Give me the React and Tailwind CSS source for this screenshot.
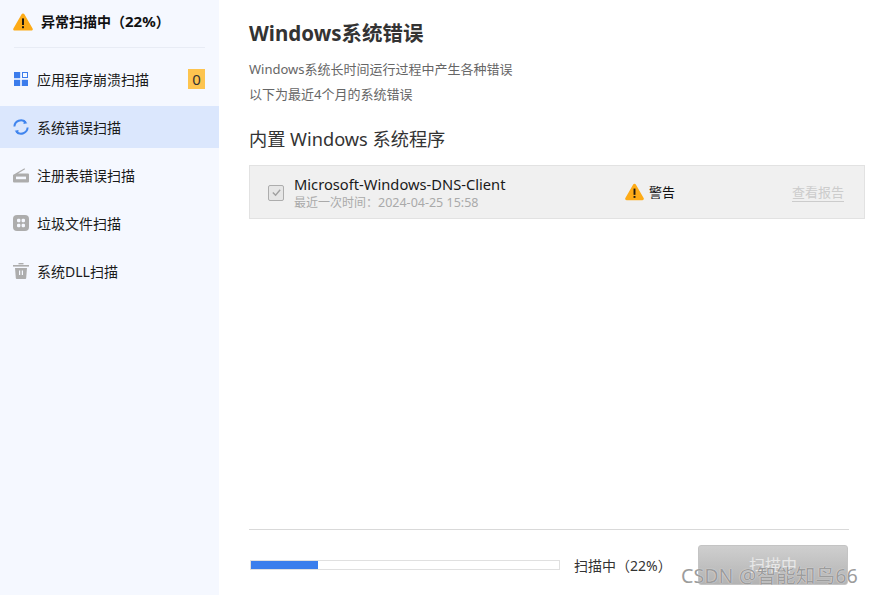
import React from "react";

function Warn({ className }) {
  return (
    <svg viewBox="0 0 20 18" className={className}>
      <path d="M10 0.4c.6 0 1.1.3 1.4.8l8.2 14.2c.6 1-.1 2.2-1.3 2.2H1.7C.5 17.6-.2 16.4.4 15.4l8.2-14.2c.3-.5.8-.8 1.4-.8z" fill="#fdab17" />
      <rect x="9" y="5.4" width="2" height="6.6" fill="#1f1a10" />
      <rect x="9" y="13.2" width="2" height="2" fill="#1f1a10" />
    </svg>
  );
}

function NavItem({ icon, label, active, badge }) {
  return (
    <div className={`flex h-[42px] items-center pl-[13px] mb-[6px] ${active ? "bg-[#dbe7fd]" : ""}`}>
      <span className="flex h-[16px] w-[16px] shrink-0 items-center justify-center">{icon}</span>
      <span className="ml-[8px] flex-1 text-[14px] text-[#1a1a1a]">{label}</span>
      {badge != null && (
        <span className="mr-[14px] flex h-[20px] w-[17px] items-center justify-center bg-[#fdc44f] text-[15px] text-[#333]">{badge}</span>
      )}
    </div>
  );
}

export default function App() {
  return (
    <div className="relative flex h-[595px] w-[873px] overflow-hidden bg-white font-['Noto_Sans','Noto_Sans_CJK_SC',sans-serif]">
      <aside className="w-[219px] shrink-0 bg-[#f5f8ff]">
        <div className="mx-[14px] flex h-[48px] items-center border-b border-[#e8ecf5] pb-[4px]">
          <Warn className="h-[18px] w-[20px] -ml-[1px]" />
          <span className="ml-[8px] text-[14px] font-bold text-[#111]">异常扫描中（<span className="text-[15px]">22%</span>）</span>
        </div>
        <div className="mt-[10px]">
          <NavItem
            badge="0"
            label="应用程序崩溃扫描"
            icon={
              <svg viewBox="0 0 14 14" className="h-[14px] w-[14px]">
                <rect x="0" y="0" width="6.2" height="6.2" fill="#3b7cec" />
                <rect x="8.5" y="0.5" width="5" height="5" fill="none" stroke="#3b7cec" />
                <rect x="0" y="7.8" width="6.2" height="6.2" fill="#3b7cec" />
                <rect x="7.8" y="7.8" width="6.2" height="6.2" fill="#3b7cec" />
              </svg>
            }
          />
          <NavItem
            active
            label="系统错误扫描"
            icon={
              <svg viewBox="0 0 16 16" className="h-[16px] w-[16px]" fill="none" stroke="#4085ee" strokeWidth="2">
                <path d="M1.4 7.5A6.6 6.6 0 0 1 12.6 3.2" />
                <path d="M14.6 8.5A6.6 6.6 0 0 1 3.4 12.8" />
                <path d="M11 .8l3.3 3.4-3.8.7z" fill="#4085ee" stroke="none" />
                <path d="M5 15.2l-3.3-3.4 3.8-.7z" fill="#4085ee" stroke="none" />
              </svg>
            }
          />
          <NavItem
            label="注册表错误扫描"
            icon={
              <svg viewBox="0 0 16 15" className="h-[15px] w-[16px]">
                <path d="M.8 6.5L11.5.3l.6 1L5 5.5h10a1 1 0 0 1 1 1v7a1 1 0 0 1-1 1H1a1 1 0 0 1-1-1v-6a1 1 0 0 1 .8-1z" fill="#adadad" />
                <rect x="3" y="8.6" width="10" height="2.6" fill="#f5f8ff" />
              </svg>
            }
          />
          <NavItem
            label="垃圾文件扫描"
            icon={
              <svg viewBox="0 0 16 16" className="h-[16px] w-[16px]">
                <rect x="0" y="0" width="16" height="16" rx="4" fill="#adadad" />
                <rect x="4" y="3.8" width="3.4" height="3.4" rx="1.2" fill="#f5f8ff" />
                <rect x="8.6" y="3.8" width="3.4" height="3.4" rx="1.2" fill="#f5f8ff" />
                <rect x="4" y="8.8" width="3.4" height="3.4" rx="1.2" fill="#f5f8ff" />
                <rect x="8.6" y="8.8" width="3.4" height="3.4" rx="1.2" fill="#f5f8ff" />
              </svg>
            }
          />
          <NavItem
            label="系统DLL扫描"
            icon={
              <svg viewBox="0 0 16 16" className="h-[16px] w-[16px]">
                <rect x="5.5" y="0" width="5" height="1.4" fill="#adadad" />
                <rect x="0" y="2" width="16" height="1.6" fill="#adadad" />
                <path d="M2 5h12l-.8 10a1 1 0 0 1-1 1H3.8a1 1 0 0 1-1-1z" fill="#adadad" />
                <rect x="6" y="7.5" width="1.2" height="4.5" fill="#f5f8ff" />
                <rect x="8.8" y="7.5" width="1.2" height="4.5" fill="#f5f8ff" />
              </svg>
            }
          />
        </div>
      </aside>

      <main className="flex min-w-0 flex-1 flex-col pl-[30px] pr-[8px]">
        <h1 className="mt-[18px] h-[30px] text-[20.5px] font-bold leading-[30px] text-[#333]">Windows系统错误</h1>
        <p className="mt-[9px] h-[25px] text-[13px] leading-[25px] text-[#666]">Windows系统长时间运行过程中产生各种错误</p>
        <p className="h-[25px] text-[13px] leading-[25px] text-[#666]">以下为最近4个月的系统错误</p>
        <h2 className="mt-[19px] h-[26px] text-[18.2px] leading-[26px] text-[#333]">内置 Windows 系统程序</h2>
        <div className="mt-[13px] flex h-[54px] w-[616px] items-center border border-[#e2e2e2] bg-[#f0f0f0]">
          <span className="ml-[18px] mt-[1px] flex h-[16px] w-[16px] items-center justify-center rounded-[2px] border border-[#adadad] bg-[#e6e6e6]">
            <svg viewBox="0 0 12 12" className="h-[11px] w-[11px]" fill="none" stroke="#a0a0a0" strokeWidth="1.5">
              <path d="M2 6l3 3 5-6" />
            </svg>
          </span>
          <div className="ml-[10px] flex w-[331px] flex-col gap-[2px]">
            <div className="text-[14.7px] leading-[18px] text-[#1a1a1a]">Microsoft-Windows-DNS-Client</div>
            <div className="text-[12px] leading-[15px] text-[#aaa]">最近一次时间：<span className="text-[12.5px]">2024-04-25 15:58</span></div>
          </div>
          <Warn className="h-[18px] w-[19px]" />
          <span className="ml-[5px] mt-[1px] flex-1 text-[13px] text-[#111]">警告</span>
          <span className="mr-[20px] border-b border-[#ccc] text-[13px] leading-[18px] text-[#ccc]">查看报告</span>
        </div>

        <div className="mt-auto mb-[65px] w-[600px] border-t border-[#d9d9d9]" />
      </main>

      <div className="absolute left-[249px] top-[545px] flex h-[40px] w-[600px] items-center">
        <div className="ml-[1px] h-[10px] w-[310px] border border-[#e0e0e0] bg-white">
          <div className="h-full w-[67px] bg-[#3a7eed]" />
        </div>
        <span className="ml-[14px] text-[14px] text-[#333]">扫描中（22%）</span>
        <div className="ml-auto mr-[1px] flex h-[40px] w-[150px] items-center justify-center rounded-[3px] border border-[#c4c4c4] bg-linear-to-b from-[#cfcfcf] to-[#b3b3b3] text-[16px] text-[#e8e8e8]">
          扫描中
        </div>
      </div>
      <span className="absolute left-[681px] top-[563px] text-[19.7px] leading-[26px] text-[#9c9c9c] [text-shadow:0_0_1px_#fff]">CSDN @智能知鸟66</span>
    </div>
  );
}
